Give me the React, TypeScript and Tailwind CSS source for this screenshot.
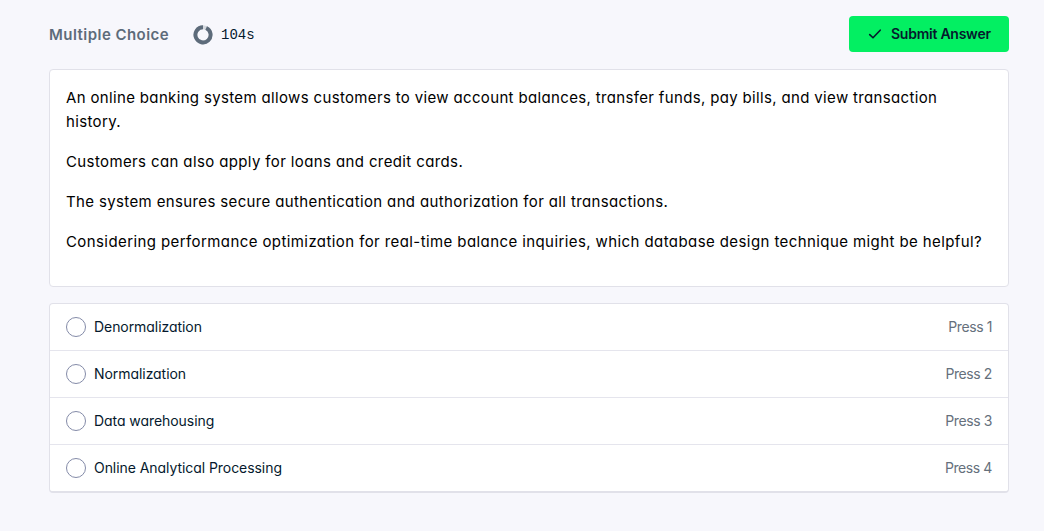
const options = [
  "Denormalization",
  "Normalization",
  "Data warehousing",
  "Online Analytical Processing",
];

export default function App() {
  return (
    <main className="h-screen overflow-hidden bg-[#f7f7fc] pr-[35px] pl-[49px] pt-4 font-['Inter',sans-serif] text-[#05192d] [font-feature-settings:'cv11']">
      <header className="flex h-9 items-center justify-between">
        <div className="flex items-center">
          <h1 className="w-[144px] whitespace-nowrap pt-0.5 text-[15px] font-semibold tracking-[0.46px] text-[#5d6b7a]">Multiple Choice</h1>
          <svg width="20" height="20" viewBox="0 0 20 20" fill="none" className="mt-0.5">
            <circle cx="10" cy="9.8" r="7.6" stroke="#d5d9df" strokeWidth="3.9" />
            <path d="M13.2 2.9A7.6 7.6 0 1 1 10 2.2" stroke="#5d6b7a" strokeWidth="3.9" />
          </svg>
          <span className="ml-2 pt-0.5 font-['Liberation_Mono',monospace] text-sm">104s</span>
        </div>
        <button className="flex h-9 w-40 items-center rounded bg-[#03ef62] pl-[19px] text-sm font-semibold tracking-[-0.25px] whitespace-nowrap">
          <svg width="14" height="14" viewBox="0 0 14 14" fill="none" className="mr-[9px]">
            <path d="M1.7 7.6 5 10.8 12.2 3.2" stroke="currentColor" strokeWidth="1.6" strokeLinecap="round" strokeLinejoin="round" />
          </svg>
          Submit Answer
        </button>
      </header>
      <section className="mt-[17px] flex h-[218px] flex-col gap-4 rounded border border-[#e1e1e9] bg-white px-4 pt-4 text-[15px] leading-6 whitespace-nowrap text-black">
        <p className="tracking-[0.345px]">
          An online banking system allows customers to view account balances, transfer funds, pay bills, and view transaction
          <br />
          history.
        </p>
        <p className="tracking-[0.38px]">Customers can also apply for loans and credit cards.</p>
        <p className="tracking-[0.365px]">The system ensures secure authentication and authorization for all transactions.</p>
        <p className="tracking-[0.41px]">Considering performance optimization for real-time balance inquiries, which database design technique might be helpful?</p>
      </section>
      <ul className="mt-4 h-[190px] overflow-hidden rounded border border-b-2 border-[#e1e1e9] bg-white text-sm">
        {options.map((label, i) => (
          <li key={label} className="flex h-[47px] items-center border-b border-[#e5e5ed] px-4 last:h-[46px] last:border-b-0">
            <span className="size-5 shrink-0 rounded-full border border-[#848ba8]" />
            <span className="ml-2 tracking-[-0.06px]">{label}</span>
            <span className="ml-auto tracking-[-0.4px] text-[#65707c]">Press {i + 1}</span>
          </li>
        ))}
      </ul>
    </main>
  );
}
